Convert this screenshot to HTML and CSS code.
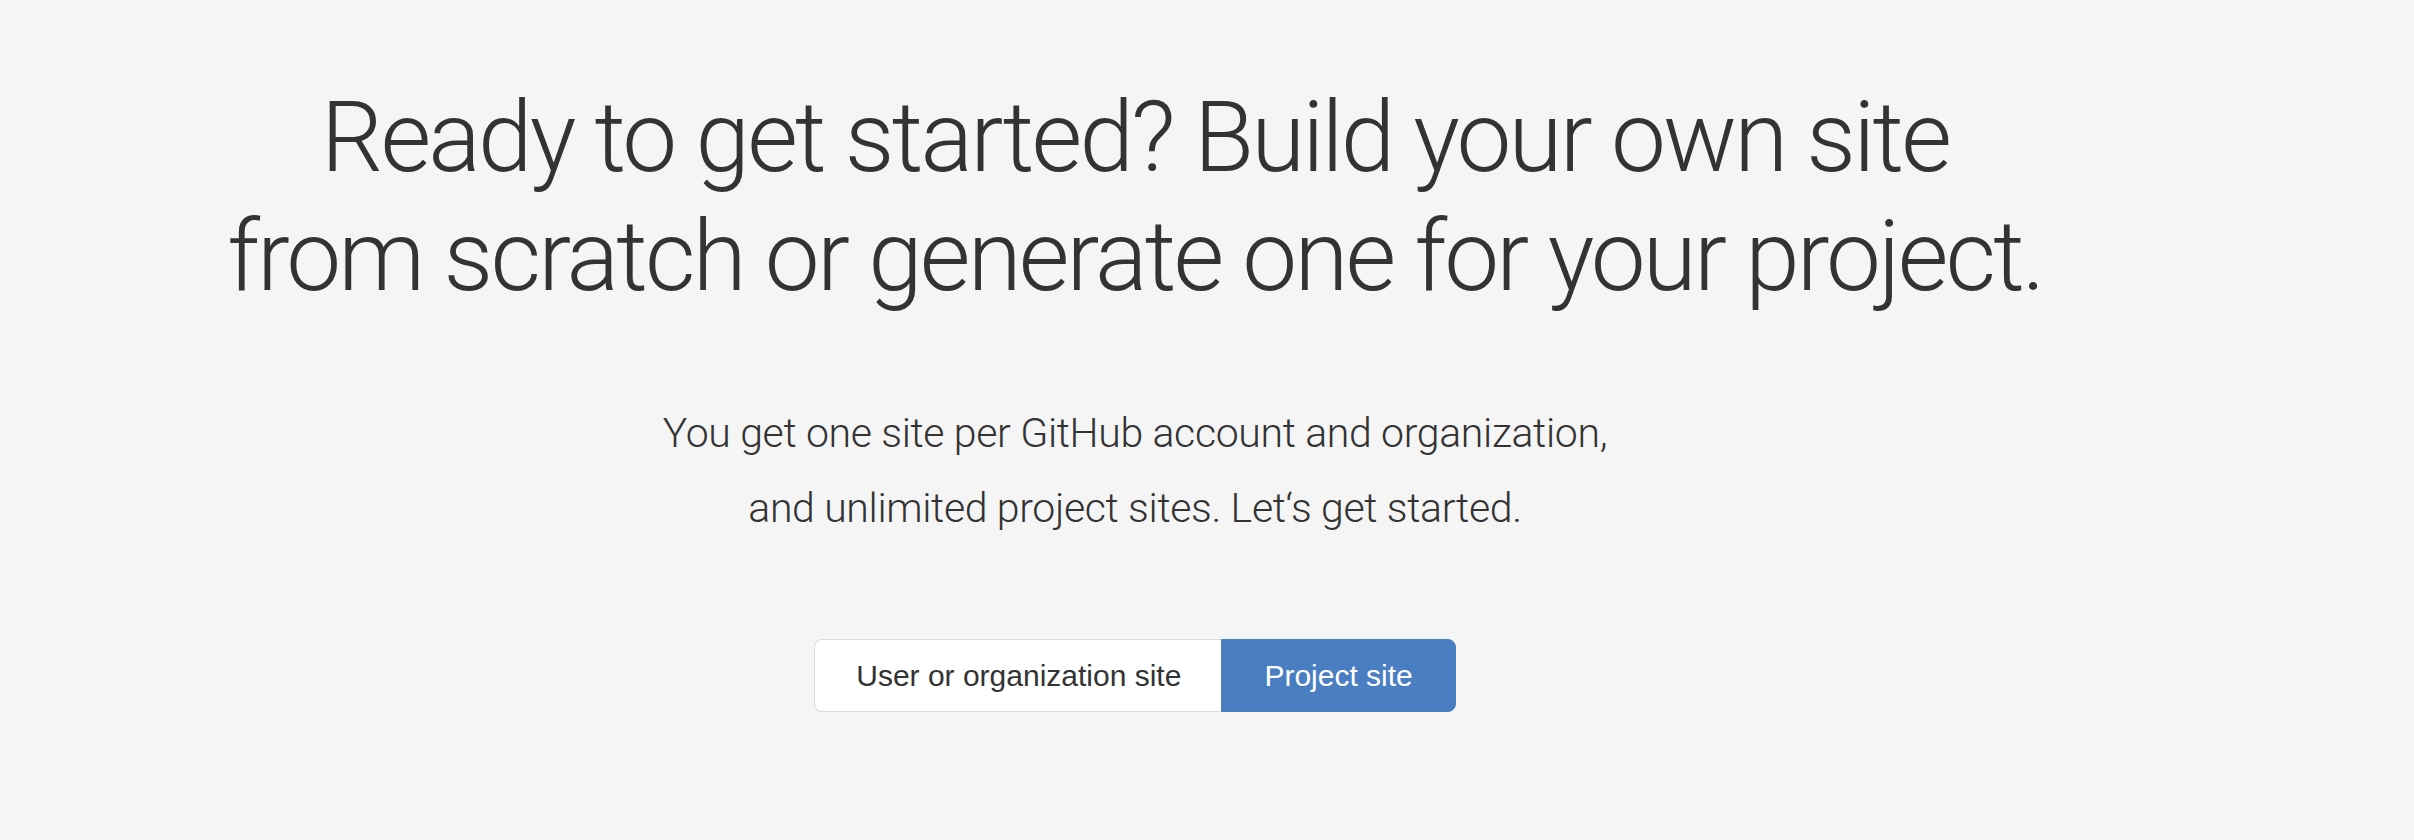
FILE: index.html
```html
<!DOCTYPE html>
<html lang="en">
<head>
<meta charset="utf-8">
<title>Ready to get started?</title>
<link rel="stylesheet" href="styles.css">
</head>
<body>
<main class="page">
  <section class="cta">
    <h1 class="cta-title">Ready to get started? Build your own site<br>from scratch or generate one for your project.</h1>
    <p class="cta-text">You get one site per GitHub account and organization,<br>and unlimited project sites. Let‘s get started.</p>
    <div class="btn-group">
      <a class="btn btn-default" href="#">User or organization site</a>
      <a class="btn btn-primary" href="#">Project site</a>
    </div>
  </section>
</main>
</body>
</html>
```

FILE: styles.css
```css
html, body {
  margin: 0;
  padding: 0;
  background: #f5f5f5;
}

.page {
  width: 2414px;
  height: 840px;
  box-sizing: border-box;
  padding-right: 144px;
  background: #f5f5f5;
}

.cta {
  display: flex;
  flex-direction: column;
  align-items: center;
  text-align: center;
  padding-top: 78px;
  color: #333333;
}

.cta-title {
  margin: 0;
  font-family: Roboto, "Helvetica Neue", sans-serif;
  font-weight: 300;
  font-size: 98px;
  line-height: 119px;
  letter-spacing: -2.8px;
}

.cta-text {
  margin: 80px 0 0;
  font-family: Roboto, "Helvetica Neue", sans-serif;
  font-weight: 300;
  font-size: 41px;
  line-height: 75px;
  letter-spacing: -0.35px;
}

.btn-group {
  display: flex;
  margin-top: 93px;
}

.btn {
  display: block;
  box-sizing: border-box;
  height: 73px;
  padding: 0 42px;
  font-family: "Liberation Sans", Arial, sans-serif;
  font-size: 30px;
  line-height: 71px;
  text-decoration: none;
  border: 1px solid #dcdcdc;
}

.btn-default {
  padding: 0 40px 0 41px;
  background: #ffffff;
  color: #333333;
  border-radius: 8px 0 0 8px;
  border-right: none;
}

.btn-primary {
  background: #4a7ec2;
  border-color: #4a7ec2;
  color: #ffffff;
  border-radius: 0 8px 8px 0;
}
```
